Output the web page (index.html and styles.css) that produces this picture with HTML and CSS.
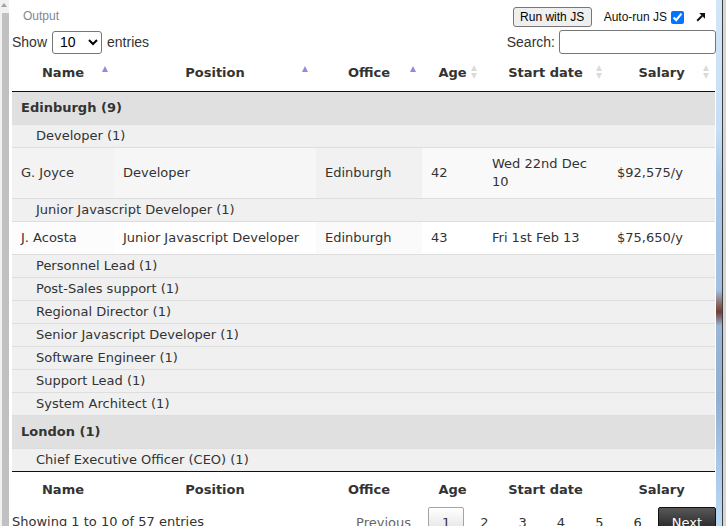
FILE: index.html
```html
<!DOCTYPE html>
<html>
<head>
<meta charset="utf-8">
<link rel="stylesheet" href="styles.css">
</head>
<body>
<div class="frame">
  <div class="sb-left">
    <div class="sb-top"></div>
    <div class="sb-thumb"></div>
  </div>
  <div class="main">
    <div class="toolbar">
      <span class="output-label">Output</span>
      <div class="toolbar-actions">
        <button class="run-btn">Run with JS</button>
        <label class="autorun">Auto-run JS<input type="checkbox" checked></label>
        <svg class="popout" viewBox="0 0 10 10" width="10" height="10">
          <path d="M1.2 8.8 L6.2 3.8" stroke="#111" stroke-width="2" fill="none"/>
          <polygon points="3.2,1 9,1 9,6.8" fill="#111"/>
        </svg>
      </div>
    </div>
    <div class="controls">
      <label class="length">Show<select><option>10</option><option>25</option><option>50</option></select>entries</label>
      <label class="search">Search:<input type="search"></label>
    </div>
    <table class="grid">
      <colgroup>
        <col class="c-name"><col class="c-pos"><col class="c-off"><col class="c-age"><col class="c-date"><col class="c-sal">
      </colgroup>
      <thead>
        <tr>
          <th>Name<span class="si asc"></span></th>
          <th>Position<span class="si asc si-pos"></span></th>
          <th>Office<span class="si asc"></span></th>
          <th>Age<span class="si both"></span></th>
          <th>Start date<span class="si both"></span></th>
          <th>Salary<span class="si both"></span></th>
        </tr>
      </thead>
      <tbody>
        <tr class="grp"><td colspan="6">Edinburgh (9)</td></tr>
        <tr class="sub"><td colspan="6">Developer (1)</td></tr>
        <tr class="odd">
          <td class="s2">G. Joyce</td><td class="s3">Developer</td><td class="s1">Edinburgh</td><td>42</td><td>Wed 22nd Dec 10</td><td>$92,575/y</td>
        </tr>
        <tr class="sub"><td colspan="6">Junior Javascript Developer (1)</td></tr>
        <tr class="even">
          <td class="s2">J. Acosta</td><td class="s3">Junior Javascript Developer</td><td class="s1">Edinburgh</td><td>43</td><td>Fri 1st Feb 13</td><td>$75,650/y</td>
        </tr>
        <tr class="sub"><td colspan="6">Personnel Lead (1)</td></tr>
        <tr class="sub"><td colspan="6">Post-Sales support (1)</td></tr>
        <tr class="sub"><td colspan="6">Regional Director (1)</td></tr>
        <tr class="sub"><td colspan="6">Senior Javascript Developer (1)</td></tr>
        <tr class="sub"><td colspan="6">Software Engineer (1)</td></tr>
        <tr class="sub"><td colspan="6">Support Lead (1)</td></tr>
        <tr class="sub"><td colspan="6">System Architect (1)</td></tr>
        <tr class="grp"><td colspan="6">London (1)</td></tr>
        <tr class="sub"><td colspan="6">Chief Executive Officer (CEO) (1)</td></tr>
      </tbody>
      <tfoot>
        <tr>
          <th>Name</th><th>Position</th><th>Office</th><th>Age</th><th>Start date</th><th>Salary</th>
        </tr>
      </tfoot>
    </table>
    <div class="table-footer">
      <div class="info">Showing 1 to 10 of 57 entries</div>
      <div class="paginate">
        <span class="page-btn disabled">Previous</span>
        <span class="page-btn current">1</span>
        <span class="page-btn">2</span>
        <span class="page-btn">3</span>
        <span class="page-btn">4</span>
        <span class="page-btn">5</span>
        <span class="page-btn">6</span>
        <span class="page-btn next-hover">Next</span>
      </div>
    </div>
  </div>
  <div class="sb-right">
    <div class="rs-blue"></div>
    <div class="rs-line"></div>
    <div class="rs-gray"></div>
  </div>
</div>
</body>
</html>
```

FILE: styles.css
```css
html, body {
  margin: 0;
  padding: 0;
}
body {
  font-family: "DejaVu Sans", Verdana, sans-serif;
  font-size: 13px;
  color: #333;
  background: #fff;
  overflow: hidden;
}
.frame {
  display: flex;
  width: 726px;
  height: 526px;
  overflow: hidden;
}

/* left scrollbar fragment */
.sb-left {
  width: 9px;
  flex: none;
  background: #f1f1f1;
  display: flex;
  flex-direction: column;
}
.sb-top {
  height: 13px;
  flex: none;
  display: flex;
  align-items: center;
  padding-left: 1px;
}
.sb-top::before {
  content: "";
  border-left: 3px solid transparent;
  border-right: 3px solid transparent;
  border-bottom: 4px solid #a3a3a3;
  margin-top: -3px;
}
.sb-thumb {
  flex: 1;
  margin-left: 2px;
  background: #c1c1c1;
}

/* right edge fragment */
.sb-right {
  flex: 1;
  display: flex;
}
.rs-blue {
  width: 6px;
  background: linear-gradient(to bottom, #d3e6f8 0, #c6def6 130px, #aacaea 175px, #a0c0e2 290px, #8a6a60 304px, #6f3e34 312px, #98b6d6 326px, #8fb0d2 400px, #a6c6e8 460px, #bcdaf6 526px);
}
.rs-line {
  width: 1px;
  background: #3f3f3f;
}
.rs-gray {
  flex: 1;
  background: #d6d6d6;
}

.main {
  width: 704px;
  flex: none;
  padding-left: 3px;
  display: flex;
  flex-direction: column;
}
.main > * {
  flex: none;
}

/* toolbar */
.toolbar {
  height: 30px;
  box-sizing: border-box;
  padding-top: 7px;
  display: flex;
  justify-content: space-between;
  align-items: flex-start;
}
.output-label {
  font: 12px/18px "Liberation Sans", Arial, sans-serif;
  color: #7f8792;
  margin-left: 11px;
}
.toolbar-actions {
  display: flex;
  align-items: center;
  height: 20px;
  margin-right: 10px;
}
.run-btn {
  font: 12px "Liberation Sans", Arial, sans-serif;
  color: #000;
  width: 79px;
  height: 20px;
  padding: 0;
  border: 1px solid #767676;
  border-radius: 3px;
  background: #efefef;
}
.autorun {
  font: 12px "Liberation Sans", Arial, sans-serif;
  color: #111;
  display: flex;
  align-items: center;
  gap: 4px;
  margin-left: 12px;
}
.autorun input {
  margin: 0;
  width: 13px;
  height: 13px;
}
.popout {
  margin-left: 12px;
  display: block;
}

/* controls */
.controls {
  height: 24px;
  display: flex;
  justify-content: space-between;
  align-items: center;
  font: 14px "Liberation Sans", Arial, sans-serif;
  color: #333;
}
.length, .search {
  display: flex;
  align-items: center;
}
.length select {
  width: 50px;
  height: 23px;
  margin: 0 5px;
  font: 14px "Liberation Sans", Arial, sans-serif;
  border: 1px solid #767676;
  border-radius: 3px;
  background: #fff;
  color: #000;
  padding: 0 3px;
}
.search input {
  width: 157px;
  height: 24px;
  box-sizing: border-box;
  margin: 0 0 0 4px;
  border: 1px solid #767676;
  border-radius: 3px;
  padding: 0 4px;
}

/* table */
.grid {
  width: 703px;
  border-collapse: separate;
  border-spacing: 0;
  table-layout: fixed;
}
.c-name { width: 102px; }
.c-pos { width: 202px; }
.c-off { width: 106px; }
.c-age { width: 61px; }
.c-date { width: 125px; }
.c-sal { width: 107px; }

.grid th {
  font-weight: bold;
  text-align: center;
  line-height: 18px;
  padding: 0;
  color: #333;
}
.grid thead th {
  position: relative;
  height: 37px;
  border-bottom: 1px solid #111;
}
.grid tfoot th {
  border-top: 1px solid #111;
  padding: 9px 0 6px;
}
.si {
  position: absolute;
  right: 5px;
  top: 11px;
  width: 7px;
  height: 14px;
}
.si-pos { right: 7px; }
.si::before, .si::after {
  content: "";
  position: absolute;
  left: 0;
  border-left: 3.5px solid transparent;
  border-right: 3.5px solid transparent;
}
.si.asc::before {
  top: 1px;
  border-bottom: 6px solid #8d8ddc;
}
.si.asc::after { display: none; }
.si.both::before {
  top: 0;
  border-bottom: 6px solid #dadada;
}
.si.both::after {
  top: 8px;
  border-top: 6px solid #dadada;
}

.grid td {
  padding: 7px 9px;
  line-height: 18px;
  border-top: 1px solid #ddd;
  vertical-align: middle;
  text-align: left;
}
.grid tbody tr:first-child td {
  border-top: none;
}
.grp td {
  background: #e0e0e0;
  font-weight: bold;
}
.sub td {
  background: #f0f0f0;
  padding: 2px 9px 2px 24px;
}
.odd td { background: #f9f9f9; }
.odd td.s1 { background: #f1f1f1; }
.odd td.s2 { background: #f3f3f3; }
.odd td.s3 { background: #f6f6f6; }
.even td { background: #fff; }
.even td.s1 { background: #fafafa; }
.even td.s2 { background: #fcfcfc; }
.even td.s3 { background: #fefefe; }

/* footer */
.table-footer {
  display: flex;
  justify-content: space-between;
  align-items: flex-start;
}
.info {
  padding-top: 8px;
  line-height: 18px;
}
.paginate {
  padding-top: 2px;
  display: flex;
}
.page-btn {
  padding: 6px 13px;
  line-height: 18px;
  border: 1px solid transparent;
  border-radius: 2px;
  margin-left: 2px;
  color: #333;
}
.page-btn.disabled {
  color: #666;
  margin-right: 1px;
}
.page-btn.current {
  border-color: #a3a3a3;
  background: linear-gradient(to bottom, #fff 0%, #dcdcdc 100%);
}
.page-btn.next-hover {
  color: #fff;
  border-color: #111;
  background: linear-gradient(to bottom, #585858 0%, #111 100%);
}
```
